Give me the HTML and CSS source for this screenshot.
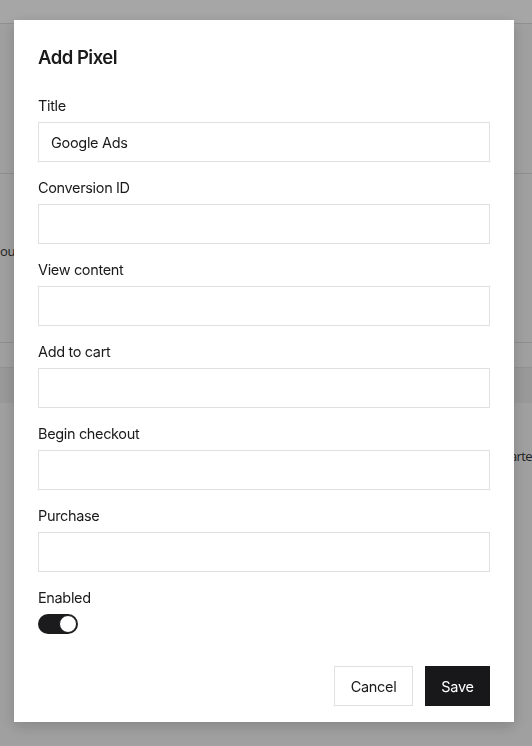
FILE: index.html
```html
<!DOCTYPE html>
<html lang="en">
<head>
<meta charset="utf-8">
<title>Add Pixel</title>
<link rel="stylesheet" href="styles.css">
</head>
<body>
<div class="page">
  <div class="page-header"></div>
  <div class="page-section sec-a"></div>
  <div class="page-section sec-b">
    <div class="row-text"><span class="left-word">ou</span></div>
  </div>
  <div class="page-band"></div>
  <div class="page-section sec-c">
    <div class="row-text right"><span class="right-word">arte</span></div>
  </div>
</div>
<div class="overlay">
  <div class="modal">
    <h1 class="modal-title">Add Pixel</h1>
    <form class="form">
      <label class="field">
        <span class="field-label">Title</span>
        <input class="field-input" type="text" value="Google Ads">
      </label>
      <label class="field">
        <span class="field-label">Conversion ID</span>
        <input class="field-input" type="text">
      </label>
      <label class="field">
        <span class="field-label">View content</span>
        <input class="field-input" type="text">
      </label>
      <label class="field">
        <span class="field-label">Add to cart</span>
        <input class="field-input" type="text">
      </label>
      <label class="field">
        <span class="field-label">Begin checkout</span>
        <input class="field-input" type="text">
      </label>
      <label class="field">
        <span class="field-label">Purchase</span>
        <input class="field-input" type="text">
      </label>
      <div class="field">
        <span class="field-label">Enabled</span>
        <span class="toggle"><span class="knob"></span></span>
      </div>
      <div class="actions">
        <button type="button" class="btn btn-secondary">Cancel</button>
        <button type="button" class="btn btn-primary">Save</button>
      </div>
    </form>
  </div>
</div>
</body>
</html>
```
FILE: styles.css
```css
* { box-sizing: border-box; }
html, body { margin: 0; padding: 0; }
body {
  width: 532px;
  height: 746px;
  overflow: hidden;
  background: #f6f6f6;
  font-family: Inter, "Liberation Sans", sans-serif;
  color: #1a1a1a;
}
.page { height: 746px; }
.page-header { height: 24px; background: #ffffff; border-bottom: 1px solid #dcdcdc; }
.page-section { border-bottom: 1px solid #dcdcdc; }
.sec-a { height: 150px; }
.sec-b { height: 169px; padding-top: 67px; }
.page-band { height: 36px; margin-top: 24px; background: #ebebeb; border-top: 1px solid #e0e0e0; }
.sec-c { height: 200px; border-bottom: none; padding-top: 43px; }
.row-text {
  display: flex;
  font-family: "Open Sans", sans-serif;
  font-size: 13px;
  color: #333;
  line-height: 20px;
}
.row-text.right { justify-content: flex-end; }
.left-word { margin-left: 0; letter-spacing: -0.2px; }
.right-word { margin-right: 0; letter-spacing: -0.6px; }

.overlay {
  position: fixed;
  inset: 0;
  background: rgba(0, 0, 0, 0.35);
  display: flex;
  justify-content: flex-start;
  padding: 20px 0 0 14px;
}
.modal {
  width: 500px;
  height: 702px;
  background: #ffffff;
  padding: 24px 24px 16px;
  box-shadow: 0 4px 14px rgba(0, 0, 0, 0.18);
  display: flex;
  flex-direction: column;
}
.modal-title {
  margin: 0 0 26px;
  font-size: 18.5px;
  line-height: 26px;
  font-weight: 600;
  letter-spacing: -0.5px;
}
.form {
  display: flex;
  flex-direction: column;
  gap: 16px;
  flex: 1;
}
.field {
  display: flex;
  flex-direction: column;
  gap: 6px;
}
.field-label {
  font-size: 14.5px;
  line-height: 20px;
  font-weight: 400;
  letter-spacing: -0.35px;
}
.field-input {
  height: 40px;
  width: 100%;
  border: 1px solid #e0e0e0;
  border-radius: 0;
  padding: 0 12px;
  font-family: inherit;
  font-size: 14.5px;
  color: #1a1a1a;
  letter-spacing: -0.3px;
  background: #fff;
  outline: none;
}
.toggle {
  width: 40px;
  height: 20px;
  border-radius: 10px;
  background: #1b1b1d;
  display: flex;
  align-items: center;
  justify-content: flex-end;
  padding: 1px;
}
.knob {
  width: 18px;
  height: 18px;
  border-radius: 50%;
  background: #fff;
  border: 1.5px solid #1b1b1d;
}
.actions {
  margin-top: auto;
  display: flex;
  justify-content: flex-end;
  gap: 12px;
}
.btn {
  height: 40px;
  padding: 0 12px;
  font-family: inherit;
  font-size: 14.5px;
  letter-spacing: -0.3px;
  border-radius: 0;
  cursor: pointer;
}
.btn-secondary {
  background: #fff;
  border: 1px solid #e0e0e0;
  color: #1a1a1a;
  width: 79px;
}
.btn-primary {
  background: #18181a;
  border: 1px solid #18181a;
  color: #fff;
  width: 65px;
}
```
